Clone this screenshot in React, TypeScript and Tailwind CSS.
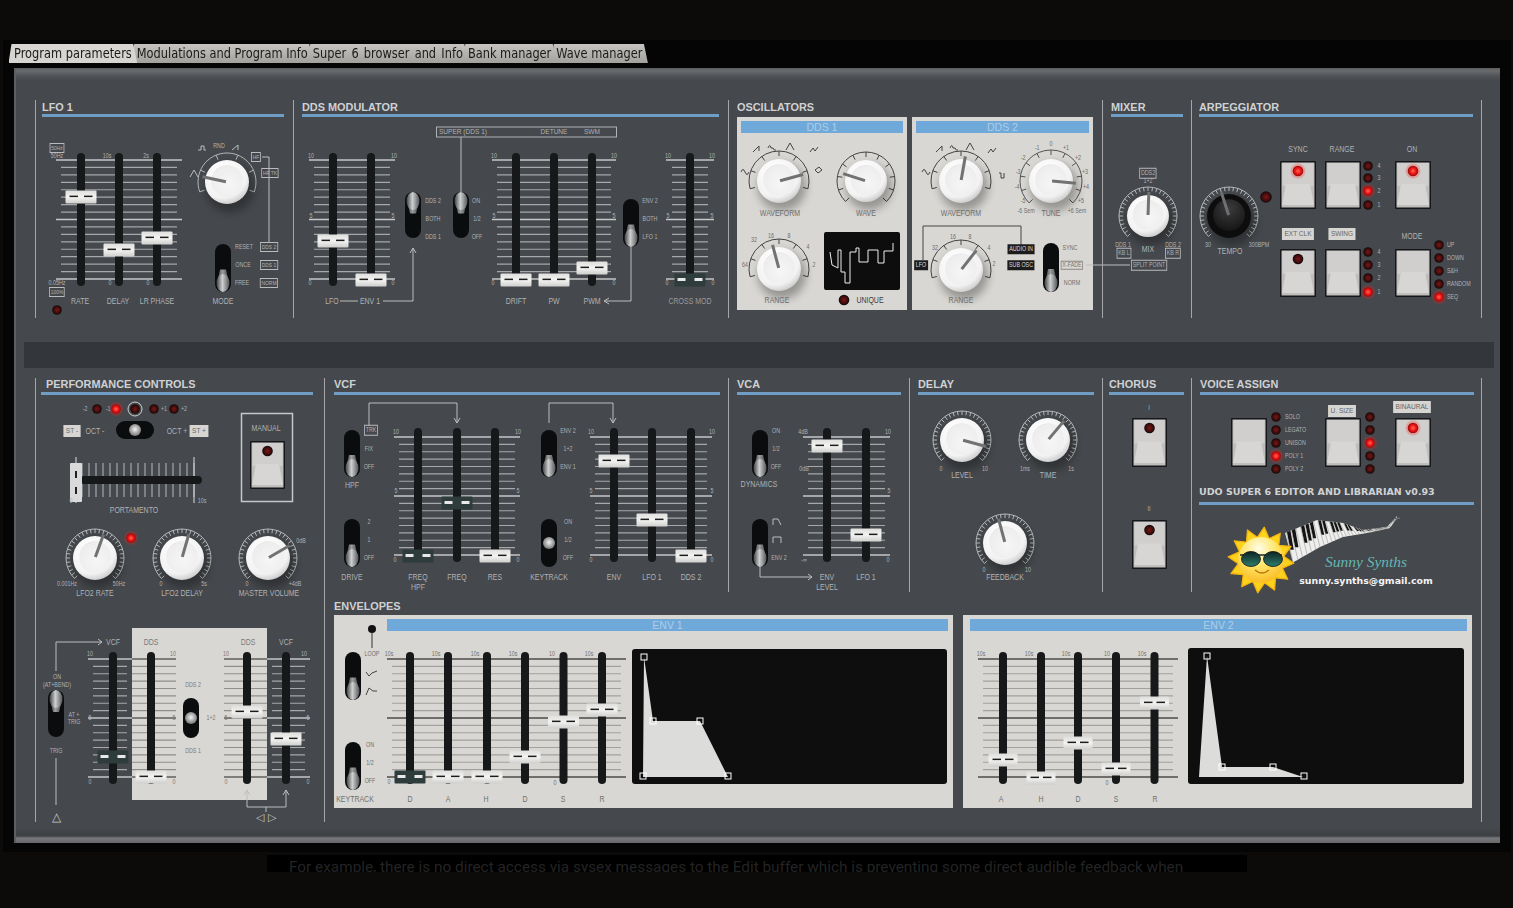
import React, { createContext, useContext } from "react";

const Origin = createContext({ x: 0, y: 0 });

function L({ t, x, y, s = 7, c, box, light, black, left, bold, nc, font = "font-['Liberation_Sans',sans-serif]", cls = "" }: any) {
  const o = useContext(Origin);
  const base = "absolute whitespace-nowrap leading-none " + font + " ";
  const pos = left ? "-translate-y-1/2 origin-left " : "-translate-x-1/2 -translate-y-1/2 ";
  const deco = box
    ? "border border-[#b9bbbd] px-[1px] py-[1px] "
    : light
      ? "bg-[#d6d5d2] px-[3px] py-[2px] text-[#666] "
      : black
        ? "bg-[#1c1c1c] px-[2px] py-[1.5px] text-[#ddd] "
        : "";
  return (
    <span
      className={base + pos + deco + (nc ? "" : "scale-x-[0.82] ") + cls + (bold ? " font-bold" : "")}
      style={{ left: x - o.x, top: y - o.y, fontSize: s, color: c }}
    >
      {t}
    </span>
  );
}

function Ls({ items, c = "#b0b2b4", s = 7 }: any) {
  return (
    <>
      {items.map((i: any, k: number) => (
        <L key={k} t={i[0]} x={i[1]} y={i[2]} s={i[3] || s} c={c} />
      ))}
    </>
  );
}

function Section({ x, y, w, h, cls = "", art, labels, children }: any) {
  return (
    <Origin.Provider value={{ x, y }}>
      <section className={"relative shrink-0 " + cls} style={{ width: w, height: h }}>
        {children}
        <svg className="absolute inset-0 w-full h-full overflow-visible pointer-events-none" viewBox={`${x} ${y} ${w} ${h}`}>
          {art}
        </svg>
        {labels}
      </section>
    </Origin.Provider>
  );
}

function Heading({ t, bar, pad, top }: any) {
  return (
    <div className={"h-[17px]" + (bar ? " border-b-[3px] border-[#6f9dc6]" : "") + (top ? " pt-[1px]" : "")}>
      <div className={"text-[10.9px] leading-[13px] font-bold font-['Liberation_Sans',sans-serif] text-[#cfd1d3] " + (pad ? "pl-[5px]" : "")}>{t}</div>
    </div>
  );
}

function Bank({ x1, x2, y1 = 160, y2 = 279, n = 17, c = "#a6a8aa", mc = "#c4c6c8", inset = 5 }: any) {
  const out = [];
  for (let i = 0; i < n; i++) {
    const y = y1 + ((y2 - y1) * i) / (n - 1);
    const major = i === 0 || i === n - 1 || i === (n - 1) / 2;
    out.push(<line key={i} x1={major ? x1 : x1 + inset} x2={major ? x2 : x2 - inset} y1={y} y2={y} stroke={major ? mc : c} strokeWidth={major ? 1.6 : 1.2} />);
  }
  return <g>{out}</g>;
}

function Track({ x, y1 = 153, y2 = 286 }: any) {
  return <rect x={x - 4} y={y1} width={8} height={y2 - y1} rx={4} fill="#17181a" />;
}

function Handle({ x, y, dark, w = 31 }: any) {
  const h = 13;
  return (
    <g>
      <rect x={x - w / 2} y={y - h / 2} width={w} height={h} rx={1} fill={dark ? "#2e3c3b" : "url(#gHandle)"} />
      {dark ? (
        <>
          <rect x={x - w / 2 + 3} y={y - 2} width={8} height={3} fill="#e8e8e8" />
          <rect x={x + w / 2 - 11} y={y - 2} width={8} height={3} fill="#e8e8e8" />
        </>
      ) : (
        <>
          <rect x={x - w / 2 + 4} y={y - 1.4} width={8.5} height={1.5} fill="#1c1c1c" />
          <rect x={x + w / 2 - 12.5} y={y - 1.4} width={8.5} height={1.5} fill="#1c1c1c" />
        </>
      )}
    </g>
  );
}

function Faders({ list, y1, y2, w }: any) {
  return (
    <>
      {list.map((f: any, k: number) => (
        <Track key={k} x={f[0]} y1={y1} y2={y2} />
      ))}
      {list.map((f: any, k: number) => (
        <Handle key={k} x={f[0]} y={f[1]} dark={f[2]} w={w} />
      ))}
    </>
  );
}

function Knob({ x, y, r = 22, a = 0, n = 11, c = "#b6b8ba", black, tick = 5, R, span = 135 }: any) {
  const rad = (d: number) => ((d - 90) * Math.PI) / 180;
  const RR = R || r + 7;
  const pts = (rr: number, d: number) => [x + rr * Math.cos(rad(d)), y + rr * Math.sin(rad(d))];
  const ticks = [];
  for (let i = 0; i < n; i++) {
    const d = -span + (2 * span * i) / (n - 1);
    const [x1, y1] = pts(RR, d);
    const [x2, y2] = pts(RR - tick, d);
    ticks.push(<line key={i} x1={x1} y1={y1} x2={x2} y2={y2} stroke={c} strokeWidth={1} />);
  }
  const [sx, sy] = pts(RR, -span);
  const [ex, ey] = pts(RR, span);
  const [p1x, p1y] = pts(r * 0.05, a);
  const [p2x, p2y] = pts(r + 3, a);
  return (
    <g>
      <path d={`M${sx} ${sy} A${RR} ${RR} 0 1 1 ${ex} ${ey}`} fill="none" stroke={c} strokeWidth={1} />
      {ticks}
      <circle cx={x + 3} cy={y + 6} r={r + 2} fill="#000" opacity={0.3} filter="url(#fBlur)" />
      <circle cx={x} cy={y} r={r} fill={black ? "#0d0d0e" : "url(#gKnob)"} />
      <circle cx={x} cy={y - 1} r={r * 0.72} fill={black ? "url(#gBlack)" : "url(#gFace)"} />
      <line x1={p1x} y1={p1y} x2={p2x} y2={p2y} stroke={black ? "#6f7072" : "#727272"} strokeWidth={3} />
    </g>
  );
}

function Switch({ x, y1, y2, pos, ball, w = 16 }: any) {
  const cy = (y1 + y2) / 2;
  const hy = pos === "top" ? y1 + 9 : y2 - 9;
  const neck = cy + (hy - cy) * 0.1;
  return (
    <g>
      <rect x={x - w / 2} y={y1} width={w} height={y2 - y1} rx={w / 2} fill="#0b0c0e" />
      {ball ? (
        <circle cx={x} cy={cy} r={6} fill="url(#gBall)" />
      ) : (
        <>
          <path d={`M${x - 3} ${neck} L${x + 3} ${neck} L${x + 6} ${hy} L${x - 6} ${hy} Z`} fill="url(#gChrome)" opacity={0.75} />
          <ellipse cx={x} cy={hy} rx={6.5} ry={9} fill="url(#gChrome)" />
        </>
      )}
    </g>
  );
}

function HSwitch({ x, y }: any) {
  return (
    <g>
      <rect x={x - 19} y={y - 9} width={38} height={18} rx={9} fill="#0b0c0e" />
      <circle cx={x} cy={y} r={6} fill="url(#gBall)" />
    </g>
  );
}

function Led({ x, y, on, r = 4 }: any) {
  return (
    <g>
      {on && <circle cx={x} cy={y} r={r + 3} fill="#ff2020" opacity={0.25} />}
      <circle cx={x} cy={y} r={r + 0.8} fill={on ? "#a01010" : "#17100f"} />
      <circle cx={x} cy={y} r={r} fill={on ? "url(#gLedOn)" : "url(#gLedOff)"} />
    </g>
  );
}

function Btn({ x, y, w = 36, h = 48, led }: any) {
  const mid = y + h * 0.48;
  return (
    <g>
      <rect x={x} y={y} width={w} height={h} rx={1} fill="#15161a" />
      <rect x={x + 1.5} y={y + 1.5} width={w - 3} height={h - 3} fill="#bfbebc" />
      <rect x={x + 2.5} y={y + 2} width={w - 5} height={mid - y} fill="#d0cfcd" />
      <path d={`M${x + 6} ${mid} L${x + w - 6} ${mid} L${x + w - 2} ${y + h - 4} L${x + 2} ${y + h - 4} Z`} fill="#d7d6d4" />
      {led !== undefined && <Led x={x + w / 2} y={y + 10} on={led === 1} r={4.5} />}
    </g>
  );
}

function Arrow({ d, c = "#bcbec0" }: any) {
  return <path d={d} fill="none" stroke={c} strokeWidth={1} />;
}

function lerp(p: number[][], X: number) {
  for (let i = 0; i < p.length - 1; i++) {
    if (X <= p[i + 1][0]) {
      const f = (X - p[i][0]) / (p[i + 1][0] - p[i][0]);
      return p[i][1] + f * (p[i + 1][1] - p[i][1]);
    }
  }
  return p[p.length - 1][1];
}

function Piano() {
  const top = [[1285, 533], [1317, 520], [1343, 523], [1363, 530], [1387, 527], [1397, 516]];
  const bot = [[1292, 563], [1320, 547], [1343, 537], [1367, 533], [1390, 528], [1397, 518]];
  const T = (x: number) => lerp(top, x);
  const B = (x: number) => lerp(bot, x);
  const xsT: number[] = [];
  const xsB: number[] = [];
  for (let x = 1285; x <= 1397; x += 2) xsT.push(x);
  for (let x = 1397; x >= 1292; x -= 2) xsB.push(x);
  const poly = [...xsT.map((x) => `${x},${T(x)}`), ...xsB.map((x) => `${x},${B(x)}`)].join(" ");
  const keys = [];
  let x = 1287;
  let i = 0;
  while (x < 1395) {
    const w = 4.8 - (x - 1287) * 0.026;
    const t = T(x);
    const b = B(x + 6);
    const bw = w * 0.72;
    const my = t + (b - t) * 0.58;
    const mx = x + 3.3;
    if (i % 7 !== 2 && i % 7 !== 6) {
      keys.push(<polygon key={"b" + i} points={`${x},${t} ${x + bw},${T(x + bw)} ${mx + bw},${my} ${mx},${my}`} fill="#141414" />);
    }
    keys.push(<line key={"l" + i} x1={x - w * 0.14} y1={T(x - w * 0.14)} x2={x + 6} y2={b} stroke="#9a9a98" strokeWidth={0.6} />);
    x += w;
    i++;
  }
  return (
    <g>
      <polygon points={poly} fill="#eeeeec" />
      {keys}
    </g>
  );
}

function Sun() {
  const cx = 1261;
  const cy = 560;
  const pts = Array.from({ length: 24 })
    .map((_, i) => {
      const r = i % 2 ? 23 : 33;
      const t = (i * Math.PI) / 12 - Math.PI / 2 + 0.1;
      return `${cx + r * Math.cos(t)},${cy + r * Math.sin(t)}`;
    })
    .join(" ");
  return (
    <g>
      <polygon points={pts} fill="#fdd21c" stroke="#f4b20e" strokeWidth={1.2} strokeLinejoin="round" />
      <circle cx={cx} cy={cy} r={23} fill="url(#gSun)" />
      <path d={`M${cx - 21} ${cy - 5} H${cx + 21}`} stroke="#1a2a28" strokeWidth={1.5} />
      <ellipse cx={cx - 10} cy={cy - 1} rx={9.5} ry={7.5} fill="url(#gLens)" stroke="#111" strokeWidth={0.8} />
      <ellipse cx={cx + 12} cy={cy - 1} rx={9.5} ry={7.5} fill="url(#gLens)" stroke="#111" strokeWidth={0.8} />
      <path d={`M${cx - 6} ${cy + 10} q7 6 14 0`} fill="none" stroke="#b8740d" strokeWidth={1.3} />
    </g>
  );
}

const tabs = ["Program parameters", "Modulations and Program Info", "Super 6 browser and Info", "Bank manager", "Wave manager"];

function Top() {
  return (
    <div className="flex">
      <Section
        x={35}
        y={100}
        w={258}
        h={218}
        cls="pl-[7px] pr-[9px] shadow-[inset_1px_0_0_#a4a6a8]"
        art={
          <>
            <Bank x1={56} x2={182} />
            <Faders y1={153} y2={286} list={[[81, 197], [119, 250], [157, 238]]} />
            <Arrow d="M262 157 H269 V243" />
            <Arrow d="M198 150 h3 v-4 h3 v4 h2" />
            <Arrow d="M190 177 L194 170 L198 177" />
            <Arrow d="M232 150 L238 145 V150" />
            <Knob x={227} y={182} r={22} a={-78} n={6} R={29} span={110} />
            <Switch x={223} y1={244} y2={292} pos="bottom" />
            <Led x={57} y={310} on={false} />
          </>
        }
        labels={
          <>
            <L t="50Hz" x={57} y={148} s={6} c="#b0b2b4" box />
            <L t="100%" x={57} y={292} s={6} c="#b0b2b4" box />
            <L t="HF" x={256} y={157} s={6} c="#b0b2b4" box />
            <L t="HF TK" x={270} y={173} s={6} c="#b0b2b4" box />
            <L t="DDS 2" x={269} y={247} s={6} c="#b0b2b4" box />
            <L t="DDS 1" x={269} y={265} s={6} c="#b0b2b4" box />
            <L t="NORM" x={269} y={283} s={6} c="#b0b2b4" box />
            <Ls s={6.5} items={[["50Hz", 57, 156], ["10s", 107, 156], ["2s", 146, 156], ["0.05Hz", 57, 283], ["0", 110, 283], ["0", 148, 283], ["RND", 219, 146], ["RESET", 244, 247], ["ONCE", 243, 265], ["FREE", 242, 283]]} />
            <Ls s={8.5} items={[["RATE", 80, 301], ["DELAY", 118, 301], ["LR PHASE", 157, 301], ["MODE", 223, 301]]} />
          </>
        }
      >
        <Heading t="LFO 1" bar top />
      </Section>
      <Section
        x={293}
        y={100}
        w={435}
        h={218}
        cls="px-[9px] shadow-[inset_1px_0_0_#a4a6a8]"
        art={
          <>
            <Bank x1={309} x2={395} />
            <Bank x1={492} x2={616} />
            <Bank x1={666} x2={714} inset={6} />
            <Faders y1={153} y2={286} list={[[333, 241], [371, 280], [516, 280], [554, 280], [592, 268], [690, 280, 1]]} />
            <rect x={436.5} y={127} width={180} height={10} fill="none" stroke="#b0b2b4" />
            <Arrow d="M461 137 V192" />
            <Arrow d="M383 301 H413 V248 M410 253 L413 248 L416 253" />
            <Arrow d="M340 301 H358" />
            <Arrow d="M631 247 V301 H604 M609 298 L604 301 L609 304" />
            <Switch x={413} y1={192} y2={238} pos="top" />
            <Switch x={461} y1={192} y2={238} pos="top" />
            <Switch x={631} y1={199} y2={247} pos="bottom" />
          </>
        }
        labels={
          <>
            <Ls s={8} items={[["SUPER (DDS 1)", 463, 132], ["DETUNE", 554, 132], ["SWM", 592, 132]]} />
            <Ls
              s={6.5}
              items={[["10", 311, 156], ["10", 394, 156], ["5", 311, 216], ["5", 393, 216], ["0", 310, 283], ["0", 393, 283], ["DDS 2", 433, 201], ["BOTH", 433, 219], ["DDS 1", 433, 237], ["ON", 476, 201], ["1/2", 477, 219], ["OFF", 477, 237], ["10", 494, 156], ["10", 614, 156], ["5", 494, 216], ["5", 614, 216], ["0", 493, 283], ["0", 614, 283], ["ENV 2", 650, 201], ["BOTH", 650, 219], ["LFO 1", 650, 237], ["10", 668, 156], ["10", 712, 156], ["5", 668, 216], ["5", 712, 216], ["0", 667, 283], ["0", 713, 283]]}
            />
            <Ls s={8.5} items={[["LFO", 332, 301], ["ENV 1", 370, 301], ["DRIFT", 516, 301], ["PW", 554, 301], ["PWM", 592, 301]]} />
            <L t="CROSS MOD" x={690} y={301} s={8.5} c="#9a9c9e" />
          </>
        }
      >
        <Heading t="DDS MODULATOR" bar top />
      </Section>
      <Section
        x={728}
        y={100}
        w={374}
        h={218}
        cls="pl-[9px] shadow-[inset_1px_0_0_#a4a6a8]"
        art={
          <>
            <Knob x={779} y={181} r={22} a={75} n={7} c="#444" R={30} span={105} />
            <Knob x={866} y={181} r={21} a={-72} n={11} c="#444" R={29} />
            <Knob x={779} y={269} r={22} a={-15} n={7} c="#444" R={30} span={105} />
            <Knob x={961} y={181} r={22} a={10} n={7} c="#444" R={30} span={105} />
            <Knob x={1051} y={181} r={22} a={95} n={11} c="#555" R={31} />
            <Knob x={961} y={270} r={22} a={38} n={7} c="#444" R={30} span={105} />
            <rect x={824} y={232} width={76} height={58} rx={2} fill="#0d0d0d" />
            <polyline points="830,252 832,265 838,268 838,250 841,250 841,272 845,272 845,283 850,283 850,252 856,252 856,248 859,248 859,262 868,262 868,250 878,250 878,263 884,263 884,251 893,251 893,243" fill="none" stroke="#eee" strokeWidth={1} />
            <Led x={844} y={300} on={false} r={4.5} />
            <path d="M923 260 V226 H1021 V245" fill="none" stroke="#444" />
            <Switch x={1051} y1={243} y2={292} pos="bottom" />
            <Arrow d="M1086 265 H1130" />
            <g fill="none" stroke="#444" strokeWidth={1}>
              <path d="M741 172 q2 -5 4 0 q2 5 4 0" />
              <path d="M753 152 L759 146 V151" />
              <path d="M768 148 q2 -5 3 0 h2 q1 3 3 2" />
              <path d="M786 150 L790 143 L794 150" />
              <path d="M810 152 l3 -4 l2 3 l3 -4" />
              <path d="M815 170 l4 -3 l3 3 l-4 3 z" />
              <path d="M922 172 q2 -5 4 0 q2 5 4 0" />
              <path d="M936 152 L942 146 V151" />
              <path d="M950 148 q2 -5 3 0 h2 q1 3 3 2" />
              <path d="M966 150 L970 143 L974 150" />
              <path d="M988 153 l3 -4 l2 3 l3 -4" />
              <path d="M999 173 h2 v5 h3 v-5" />
            </g>
            <Knob x={1148} y={216} r={21} a={2} n={31} R={29} tick={4} />
            <Knob x={1229} y={216} r={22} a={-18} n={31} black tick={4} R={29} />
            <Led x={1266} y={197} on={false} r={5} />
            <Btn x={1280} y={161} led={1} />
            <Btn x={1325} y={161} />
            <Btn x={1395} y={161} led={1} />
            <Btn x={1280} y={249} led={0} />
            <Btn x={1325} y={249} />
            <Btn x={1395} y={249} />
            <Led x={1368} y={166} />
            <Led x={1368} y={178} />
            <Led x={1368} y={191} on />
            <Led x={1368} y={205} />
            <Led x={1368} y={252} />
            <Led x={1368} y={265} />
            <Led x={1368} y={278} />
            <Led x={1368} y={292} on />
            <Led x={1439} y={245} />
            <Led x={1439} y={258} />
            <Led x={1439} y={271} />
            <Led x={1439} y={284} />
            <Led x={1439} y={297} on />
          </>
        }
        labels={
          <>
            <Ls c="#6d6d6d" s={8.5} items={[["WAVEFORM", 780, 213], ["WAVE", 866, 213], ["RANGE", 777, 300], ["WAVEFORM", 961, 213], ["TUNE", 1051, 213], ["RANGE", 961, 300]]} />
            <L t="UNIQUE" x={870} y={300} s={8.5} c="#3d3d3d" />
            <Ls c="#6d6d6d" s={6.5} items={[["64", 745, 265], ["32", 754, 240], ["16", 771, 236], ["8", 789, 236], ["4", 808, 247], ["2", 814, 265], ["-6 Sem", 1026, 211], ["+6 Sem", 1077, 211], ["0", 1051, 144], ["-1", 1037, 148], ["+1", 1066, 148], ["-2", 1023, 158], ["+2", 1078, 158], ["-3", 1018, 172], ["+3", 1085, 172], ["-4", 1017, 187], ["+4", 1086, 187], ["-5", 1023, 201], ["+5", 1081, 201], ["32", 935, 248], ["16", 953, 237], ["8", 970, 237], ["4", 989, 248], ["2", 994, 264], ["SYNC", 1070, 248], ["NORM", 1072, 283]]} />
            <L t="LFO" x={921} y={265} s={6.5} black />
            <L t="AUDIO IN" x={1021} y={249} s={6.5} black />
            <L t="SUB OSC" x={1021} y={265} s={6.5} black />
            <L t="X-FADE" x={1072} y={265} s={6.5} c="#777" cls="border border-[#888] px-[1px]" />
            <L t="SPLIT POINT" x={1149} y={265} s={6.5} c="#b0b2b4" box />
            <L t="DDS2" x={1148} y={173} s={6.5} c="#b0b2b4" box />
            <L t="KB L" x={1124} y={253} s={6.5} c="#b0b2b4" box />
            <L t="KB R" x={1173} y={253} s={6.5} c="#b0b2b4" box />
            <Ls s={6.5} items={[["1+2", 1148, 181], ["DDS 1", 1123, 245], ["DDS 2", 1173, 245], ["30", 1208, 245], ["300BPM", 1259, 245], ["4", 1379, 166], ["3", 1379, 178], ["2", 1379, 191], ["1", 1379, 205], ["4", 1379, 252], ["3", 1379, 265], ["2", 1379, 278], ["1", 1379, 292]]} />
            <Ls s={8.5} items={[["MIX", 1148, 249], ["TEMPO", 1230, 251], ["SYNC", 1298, 149], ["RANGE", 1342, 149], ["ON", 1412, 149], ["MODE", 1412, 236]]} />
            <L t="UP" x={1447} y={245} s={6.5} c="#b0b2b4" left />
            <L t="DOWN" x={1447} y={258} s={6.5} c="#b0b2b4" left />
            <L t="S&H" x={1447} y={271} s={6.5} c="#b0b2b4" left />
            <L t="RANDOM" x={1447} y={284} s={6.5} c="#b0b2b4" left />
            <L t="SEQ" x={1447} y={297} s={6.5} c="#b0b2b4" left />
            <L t="EXT CLK" x={1298} y={234} s={8} light />
            <L t="SWING" x={1342} y={234} s={8} light />
          </>
        }
      >
        <Heading t="OSCILLATORS" top />
        <div className="flex gap-[5px]">
          <div className="w-[170px] h-[193px] bg-[#d9d7d3] p-[4px]">
            <div className="h-[12px] bg-[#6fa9da] text-center text-[10.5px] leading-[12px] font-['Liberation_Sans',sans-serif] text-[#aecde6]">DDS 1</div>
          </div>
          <div className="w-[181px] h-[193px] bg-[#d9d7d3] p-[4px]">
            <div className="h-[12px] bg-[#6fa9da] text-center text-[10.5px] leading-[12px] font-['Liberation_Sans',sans-serif] text-[#aecde6]">DDS 2</div>
          </div>
        </div>
      </Section>
      <Section x={1102} y={100} w={89} h={218} cls="pl-[9px] pr-[8px] shadow-[inset_1px_0_0_#a4a6a8]">
        <Heading t="MIXER" bar top />
      </Section>
      <Section x={1191} y={100} w={291} h={218} cls="pl-[8px] pr-[9px] shadow-[inset_1px_0_0_#a4a6a8,inset_-1px_0_0_#a4a6a8]">
        <Heading t="ARPEGGIATOR" bar top />
      </Section>
    </div>
  );
}

function Perf() {
  const verts = [];
  for (let i = 0; i < 17; i++) verts.push(<line key={i} x1={82 + i * 7} x2={82 + i * 7} y1={463} y2={497} stroke="#b8babc" strokeWidth={1} />);
  return (
    <Section
      x={35}
      y={378}
      w={289}
      h={444}
      cls="pl-[6px] pr-[11px] shadow-[inset_1px_0_0_#a4a6a8]"
      art={
        <>
          <Led x={97} y={409} />
          <Led x={116} y={409} on />
          <circle cx={135} cy={409} r={7} fill="none" stroke="#cfcfcf" />
          <Led x={135} y={409} />
          <Led x={154} y={409} />
          <Led x={174} y={409} />
          <HSwitch x={135} y={430} />
          <rect x={241.5} y={413.5} width={51} height={88} fill="none" stroke="#c6c8ca" strokeWidth={1.5} />
          <Btn x={250} y={441} w={35} h={48} led={0} />
          {verts}
          <line x1={194} x2={194} y1={457} y2={503} stroke="#c6c8ca" strokeWidth={1.2} />
          <line x1={76} x2={76} y1={457} y2={503} stroke="#c6c8ca" strokeWidth={1.2} />
          <rect x={80} y={476} width={122} height={8} rx={4} fill="#17181a" />
          <rect x={70} y={463} width={12} height={39} rx={1} fill="#dadada" />
          <rect x={75} y={471} width={2} height={7} fill="#222" />
          <rect x={75} y={487} width={2} height={7} fill="#222" />
          <Knob x={95} y={558} r={22} a={20} n={31} R={29} tick={4} />
          <Led x={131} y={538} on r={4} />
          <Knob x={182} y={558} r={22} a={16} n={31} R={29} tick={4} />
          <Knob x={268} y={558} r={22} a={60} n={31} R={29} tick={4} />
          <Bank x1={88} x2={132} y1={659} y2={777} />
          <Bank x1={224} x2={267} y1={659} y2={777} c="#8f8e8b" mc="#5f5f5d" inset={0} />
          <Bank x1={132} x2={176} y1={659} y2={777} c="#8f8e8b" mc="#5f5f5d" inset={0} />
          <Bank x1={267} x2={310} y1={659} y2={777} />
          <Faders y1={652} y2={784} list={[[113, 757, 1], [151, 777], [247, 712], [286, 739]]} />
          <Arrow d="M56 671 V642 H102 M98 639 L102 642 L98 645" />
          <Arrow d="M56 758 V805" />
          <Switch x={56} y1={690} y2={737} pos="top" />
          <Switch x={191} y1={698} y2={738} ball />
          <Arrow d="M247 790 V807 H286 V790 M244 795 L247 790 L250 795 M283 795 L286 790 L289 795 M266 807 V812" />
        </>
      }
      labels={
        <>
          <Ls s={6.5} items={[["-2", 85, 409], ["-1", 108, 409], ["+1", 164, 409], ["+2", 184, 409], ["0", 71, 501], ["10s", 202, 501], ["0.001Hz", 67, 584], ["50Hz", 119, 584], ["0", 161, 584], ["5s", 204, 584], ["0", 247, 584], ["+4dB", 295, 584], ["0dB", 301, 541], ["10", 90, 654], ["5", 90, 718], ["0", 90, 782], ["10", 304, 654], ["5", 308, 718], ["0", 308, 782], ["ON", 57, 677], ["(AT+BEND)", 57, 685], ["AT +", 74, 715], ["TRIG", 74, 722], ["TRIG", 56, 751]]} />
          <Ls c="#7a7a78" s={6.5} items={[["10", 173, 654], ["5", 174, 718], ["0", 174, 782], ["10", 226, 654], ["5", 226, 718], ["0", 226, 782], ["DDS 2", 193, 685], ["1+2", 211, 718], ["DDS 1", 193, 751]]} />
          <L t="ST -" x={72} y={431} s={8} light />
          <L t="ST +" x={199} y={431} s={8} light />
          <Ls s={8.5} items={[["OCT -", 95, 431], ["OCT +", 177, 431], ["MANUAL", 266, 428], ["PORTAMENTO", 134, 510], ["LFO2 RATE", 95, 593], ["LFO2 DELAY", 182, 593], ["MASTER VOLUME", 269, 593], ["VCF", 113, 642], ["VCF", 286, 642]]} />
          <Ls c="#7a7a78" s={8.5} items={[["DDS", 151, 642], ["DDS", 248, 642]]} />
          <L t="△" x={56} y={817} s={12} c="#c4c6c8" nc />
          <L t="◁ ▷" x={266} y={817} s={11} c="#c4c6c8" nc />
        </>
      }
    >
      <Heading t="PERFORMANCE CONTROLS" bar pad />
      <div className="absolute left-[97px] top-[250px] w-[135px] h-[172px] bg-[#d9d7d3]" />
    </Section>
  );
}

function Vcf() {
  return (
    <Section
      x={324}
      y={378}
      w={404}
      h={214}
      cls="pl-[10px] pr-[8px]"
      art={
        <>
          <Bank x1={394} x2={520} y1={437} y2={555} />
          <Bank x1={590} x2={712} y1={437} y2={555} />
          <Faders y1={428} y2={562} list={[[418, 556, 1], [457, 503, 1], [495, 556], [614, 461], [652, 520], [691, 556]]} />
          <Arrow d="M369 426 V403 H457 V423 M454 418 L457 423 L460 418" />
          <Arrow d="M549 423 V403 H613 V423 M610 418 L613 423 L616 418" />
          <Switch x={352} y1={430} y2={477} pos="bottom" />
          <Switch x={352} y1={519} y2={567} pos="bottom" />
          <Switch x={549} y1={430} y2={477} pos="bottom" />
          <Switch x={549} y1={519} y2={567} ball />
        </>
      }
      labels={
        <>
          <L t="TRK" x={371} y={430} s={6.5} c="#b0b2b4" box />
          <Ls s={6.5} items={[["FIX", 369, 449], ["OFF", 369, 467], ["2", 369, 522], ["1", 369, 540], ["OFF", 369, 558], ["10", 396, 432], ["10", 518, 432], ["5", 396, 491], ["5", 518, 491], ["0", 395, 560], ["0", 518, 560], ["ENV 2", 568, 431], ["1+2", 568, 449], ["ENV 1", 568, 467], ["ON", 568, 522], ["1/2", 568, 540], ["OFF", 568, 558], ["10", 591, 432], ["10", 712, 432], ["5", 591, 491], ["5", 712, 491], ["0", 591, 560], ["0", 712, 560]]} />
          <Ls s={8.5} items={[["HPF", 352, 485], ["DRIVE", 352, 577], ["FREQ", 418, 577], ["HPF", 418, 587], ["FREQ", 457, 577], ["RES", 495, 577], ["KEYTRACK", 549, 577], ["ENV", 614, 577], ["LFO 1", 652, 577], ["DDS 2", 691, 577]]} />
        </>
      }
    >
      <Heading t="VCF" bar />
    </Section>
  );
}

function Row2() {
  return (
    <div className="flex h-[214px]">
      <Vcf />
      <Section
        x={728}
        y={378}
        w={181}
        h={214}
        cls="pl-[9px] pr-[8px] shadow-[inset_1px_0_0_#a4a6a8]"
        art={
          <>
            <Bank x1={803} x2={890} y1={437} y2={555} />
            <Faders y1={428} y2={562} list={[[827, 446], [866, 535]]} />
            <Switch x={760} y1={430} y2={477} pos="bottom" />
            <Switch x={760} y1={519} y2={567} pos="bottom" />
            <Arrow d="M760 567 V577 H812 M808 574 L812 577 L808 580" />
            <Arrow d="M773 525 V519 H778 L781 525" />
            <Arrow d="M773 543 V537 H781 V543" />
          </>
        }
        labels={
          <>
            <Ls s={6.5} items={[["ON", 776, 431], ["1/2", 776, 449], ["OFF", 776, 467], ["ENV 2", 779, 558], ["4dB", 803, 432], ["0dB", 804, 469], ["10", 888, 432], ["5", 889, 491], ["-∞", 804, 560], ["0", 888, 560]]} />
            <Ls s={8.5} items={[["DYNAMICS", 759, 484], ["ENV", 827, 577], ["LEVEL", 827, 587], ["LFO 1", 866, 577]]} />
          </>
        }
      >
        <Heading t="VCA" bar />
      </Section>
      <Section
        x={909}
        y={378}
        w={193}
        h={214}
        cls="pl-[9px] pr-[8px] shadow-[inset_1px_0_0_#a4a6a8]"
        art={
          <>
            <Knob x={962} y={440} r={22} a={105} n={31} R={29} tick={4} />
            <Knob x={1048} y={440} r={22} a={40} n={31} R={29} tick={4} />
            <Knob x={1005} y={543} r={22} a={-15} n={31} R={29} tick={4} />
          </>
        }
        labels={
          <>
            <Ls s={6.5} items={[["0", 941, 469], ["10", 985, 469], ["1ms", 1025, 469], ["1s", 1071, 469], ["0", 984, 570], ["10", 1028, 570]]} />
            <Ls s={8.5} items={[["LEVEL", 962, 475], ["TIME", 1048, 475], ["FEEDBACK", 1005, 577]]} />
          </>
        }
      >
        <Heading t="DELAY" bar />
      </Section>
      <Section
        x={1102}
        y={378}
        w={89}
        h={214}
        cls="pl-[7px] pr-[7px] shadow-[inset_1px_0_0_#a4a6a8]"
        art={
          <>
            <Btn x={1132} y={418} w={35} h={49} led={0} />
            <Btn x={1132} y={520} w={35} h={49} led={0} />
          </>
        }
        labels={<Ls s={7} items={[["I", 1149, 407], ["II", 1149, 508]]} />}
      >
        <Heading t="CHORUS" bar />
      </Section>
      <Section
        x={1191}
        y={378}
        w={291}
        h={214}
        cls="pl-[9px] pr-[8px] shadow-[inset_1px_0_0_#a4a6a8]"
        art={
          <>
            <Btn x={1231} y={418} h={49} />
            <Btn x={1325} y={418} h={49} />
            <Btn x={1395} y={418} h={49} led={1} />
            <Led x={1276} y={417} />
            <Led x={1276} y={430} />
            <Led x={1276} y={443} />
            <Led x={1276} y={456} on />
            <Led x={1276} y={469} />
            <Led x={1370} y={417} />
            <Led x={1370} y={430} />
            <Led x={1370} y={443} on />
            <Led x={1370} y={456} />
            <Led x={1370} y={469} />
            <Piano />
            <Sun />
          </>
        }
        labels={
          <>
            <L t="SOLO" x={1285} y={417} s={6.5} c="#b0b2b4" left />
            <L t="LEGATO" x={1285} y={430} s={6.5} c="#b0b2b4" left />
            <L t="UNISON" x={1285} y={443} s={6.5} c="#b0b2b4" left />
            <L t="POLY 1" x={1285} y={456} s={6.5} c="#b0b2b4" left />
            <L t="POLY 2" x={1285} y={469} s={6.5} c="#b0b2b4" left />
            <L t="U. SIZE" x={1342} y={411} s={8} light />
            <L t="BINAURAL" x={1412} y={407} s={8} light />
            <L t="UDO SUPER 6 EDITOR AND LIBRARIAN v0.93" x={1199} y={492} s={9.5} c="#d0d2d4" left bold nc font="font-['DejaVu_Sans',sans-serif]" />
            <div className="absolute left-[8px] top-[124px] w-[275px] h-[3px] bg-[#6f9dc6]" />
            <L t="Sunny Synths" x={1366} y={562} s={15.5} c="#63b8b4" nc font="font-['Liberation_Serif',serif]" cls="italic" />
            <L t="sunny.synths@gmail.com" x={1366} y={581} s={9.4} c="#f4f4f4" bold nc font="font-['DejaVu_Sans',sans-serif]" />
          </>
        }
      >
        <Heading t="VOICE ASSIGN" bar />
      </Section>
    </div>
  );
}

function EnvShape({ pts, handles }: any) {
  return (
    <g>
      <polygon points={pts} fill="#dcdcda" />
      {handles.map((h: any, k: number) => (
        <rect key={k} x={h[0] - 3} y={h[1] - 3} width={6} height={6} fill="none" stroke="#fff" strokeWidth={1} />
      ))}
    </g>
  );
}

function Envelopes() {
  return (
    <Section
      x={324}
      y={600}
      w={1158}
      h={222}
      cls="pl-[10px] pr-[10px]"
      art={
        <>
          <circle cx={372} cy={629} r={4} fill="#111" />
          <line x1={372} x2={372} y1={633} y2={648} stroke="#333" />
          <Switch x={353} y1={652} y2={700} pos="bottom" />
          <Switch x={353} y1={742} y2={790} pos="bottom" />
          <Arrow c="#444" d="M366 672 L369 676 L372 673 L377 671" />
          <Arrow c="#444" d="M366 695 L369 688 L373 691 L377 691" />
          <Bank x1={387} x2={626} y1={659} y2={777} c="#a3a19d" mc="#4b4b49" />
          <Faders y1={652} y2={784} list={[[410, 777, 1], [448, 777], [487, 777], [525, 757], [563.5, 722], [602, 710]]} />
          <rect x={632} y={649} width={315} height={135} rx={3} fill="#0e0e0e" />
          <EnvShape pts="644,657 653,721 700,721 728,777 643,777" handles={[[644, 657], [653, 721], [700, 721], [643, 776], [728, 776]]} />
          <Bank x1={978} x2={1178} y1={659} y2={777} c="#a3a19d" mc="#4b4b49" />
          <Faders y1={652} y2={784} w={29} list={[[1003, 760], [1041, 778], [1078, 743], [1116, 769], [1154.5, 703]]} />
          <rect x={1188} y={648} width={276} height={136} rx={3} fill="#0e0e0e" />
          <EnvShape pts="1207,656 1222,767 1273,767 1303,777 1199,777" handles={[[1207, 656], [1222, 767], [1273, 767], [1304, 776]]} />
        </>
      }
      labels={
        <>
          <Ls c="#6f6f6d" s={6.5} items={[["LOOP", 372, 654], ["ON", 370, 745], ["1/2", 370, 763], ["OFF", 370, 781], ["10s", 389, 654], ["10s", 436, 654], ["10s", 475, 654], ["10s", 513, 654], ["10", 552, 654], ["10s", 589, 654], ["0", 389, 782], ["0", 555, 783], ["10s", 981, 654], ["10s", 1029, 654], ["10s", 1066, 654], ["10", 1107, 654], ["10s", 1142, 654], ["0", 1107, 783]]} />
          <Ls c="#6f6f6d" s={8.5} items={[["KEYTRACK", 355, 799], ["D", 410, 799], ["A", 448, 799], ["H", 486, 799], ["D", 525, 799], ["S", 563, 799], ["R", 602, 799], ["A", 1001, 799], ["H", 1041, 799], ["D", 1078, 799], ["S", 1116, 799], ["R", 1155, 799]]} />
        </>
      }
    >
      <div className="h-[15px] text-[10.9px] leading-[12px] font-bold font-['Liberation_Sans',sans-serif] text-[#cfd1d3]">ENVELOPES</div>
      <div className="flex gap-[10px]">
        <div className="w-[619px] h-[193px] bg-[#d9d7d3] pt-[4px] pl-[53px] pr-[5px]">
          <div className="h-[12px] bg-[#6fa9da] text-center text-[10.5px] leading-[12px] font-['Liberation_Sans',sans-serif] text-[#aecde6]">ENV 1</div>
        </div>
        <div className="w-[509px] h-[193px] bg-[#d9d7d3] pt-[4px] pl-[7px] pr-[5px]">
          <div className="h-[12px] bg-[#6fa9da] text-center text-[10.5px] leading-[12px] font-['Liberation_Sans',sans-serif] text-[#aecde6]">ENV 2</div>
        </div>
      </div>
    </Section>
  );
}

export default function App() {
  return (
    <div className="w-[1513px] h-[908px] overflow-hidden bg-[#0c0b09] font-['Liberation_Sans',sans-serif]">
      <svg className="absolute w-0 h-0">
        <defs>
          <filter id="fBlur" x="-50%" y="-50%" width="200%" height="200%">
            <feGaussianBlur stdDeviation="4" />
          </filter>
          <radialGradient id="gKnob" cx="0.4" cy="0.3" r="0.8">
            <stop offset="0" stopColor="#ffffff" />
            <stop offset="0.7" stopColor="#f2f2f2" />
            <stop offset="1" stopColor="#b9b9b9" />
          </radialGradient>
          <radialGradient id="gFace" cx="0.55" cy="0.6" r="0.7">
            <stop offset="0" stopColor="#f6f6f6" />
            <stop offset="0.8" stopColor="#ededed" />
            <stop offset="1" stopColor="#dadada" />
          </radialGradient>
          <radialGradient id="gBlack" cx="0.5" cy="0.3" r="0.8">
            <stop offset="0" stopColor="#3b3b3d" />
            <stop offset="1" stopColor="#111" />
          </radialGradient>
          <linearGradient id="gChrome" x1="0" x2="1" y1="0" y2="0">
            <stop offset="0" stopColor="#3f4042" />
            <stop offset="0.45" stopColor="#cfd0d0" />
            <stop offset="1" stopColor="#55565a" />
          </linearGradient>
          <radialGradient id="gBall" cx="0.5" cy="0.45" r="0.6">
            <stop offset="0" stopColor="#f2f2f2" />
            <stop offset="1" stopColor="#6a6a6a" />
          </radialGradient>
          <linearGradient id="gHandle" x1="0" x2="0" y1="0" y2="1">
            <stop offset="0" stopColor="#dededc" />
            <stop offset="0.5" stopColor="#f3f3f1" />
            <stop offset="1" stopColor="#cfcfcd" />
          </linearGradient>
          <radialGradient id="gLedOn" cx="0.5" cy="0.5" r="0.55">
            <stop offset="0" stopColor="#ff6a5a" />
            <stop offset="0.6" stopColor="#f01414" />
            <stop offset="1" stopColor="#a80c0c" />
          </radialGradient>
          <radialGradient id="gLedOff" cx="0.5" cy="0.5" r="0.55">
            <stop offset="0" stopColor="#7d1616" />
            <stop offset="0.7" stopColor="#3f0c0c" />
            <stop offset="1" stopColor="#200808" />
          </radialGradient>
          <radialGradient id="gSun" cx="0.45" cy="0.25" r="0.85">
            <stop offset="0" stopColor="#fffde9" />
            <stop offset="0.45" stopColor="#ffe568" />
            <stop offset="1" stopColor="#f9b112" />
          </radialGradient>
          <linearGradient id="gLens" x1="0" x2="0" y1="0" y2="1">
            <stop offset="0" stopColor="#0e2421" />
            <stop offset="1" stopColor="#2f7d6e" />
          </linearGradient>
        </defs>
      </svg>
      <div className="h-[40px]" />
      <div className="ml-[3px] w-[1508px] h-[812px] bg-[#050505]">
        <div className="flex h-[24px] pt-[4px] pl-[5.5px]">
          {tabs.map((t, i) => (
            <div
              key={t}
              className={
                "h-[19px] pl-[5.5px] pr-[5.5px] pt-[1px] -mr-[6px] flex items-center text-[11.4px] text-[#1a1a1a] font-['DejaVu_Sans',sans-serif] whitespace-nowrap [clip-path:polygon(3px_0,calc(100%-4px)_0,100%_100%,0_100%)] " +
                (i === 0 ? "relative z-10 bg-[#d7d5d1]" : i === 2 ? "[word-spacing:1.6px] bg-[linear-gradient(to_bottom,#c6c4c0,#a3a19d)]" : "bg-[linear-gradient(to_bottom,#c6c4c0,#a3a19d)]")
              }
            >
              <span className="scale-y-[1.2]">{t}</span>
            </div>
          ))}
        </div>
        <div className="relative ml-[11px] mt-[4px] w-[1486px] h-[775px] pt-[32px] pl-[21px] bg-[linear-gradient(to_bottom,#5c5e60_0px,#696b6d_3px,#505356_8px,#45484c_13px,#45484c_760px,#3d4043_768px,#75777a_770px,#67696b_775px)] shadow-[inset_2px_0_0_#5c5e60]">
          <Top />
          <div className="mt-[24px] -ml-[11px] w-[1470px] h-[26px] bg-[#33363a]" />
          <div className="mt-[10px] flex">
            <Perf />
            <div className="w-[1158px] shadow-[inset_1px_0_0_#a4a6a8,inset_-1px_0_0_#a4a6a8]">
              <Row2 />
              <div className="h-[8px]" />
              <Envelopes />
            </div>
          </div>
        </div>
      </div>
      <div className="ml-[267px] mt-[3px] w-[980px] h-[17px] bg-black overflow-hidden pl-[22px] text-[15.35px] leading-[24px] font-['Roboto',sans-serif] text-[#242424] whitespace-nowrap">
        For example, there is no direct access via sysex messages to the Edit buffer which is preventing some direct audible feedback when
      </div>
    </div>
  );
}
